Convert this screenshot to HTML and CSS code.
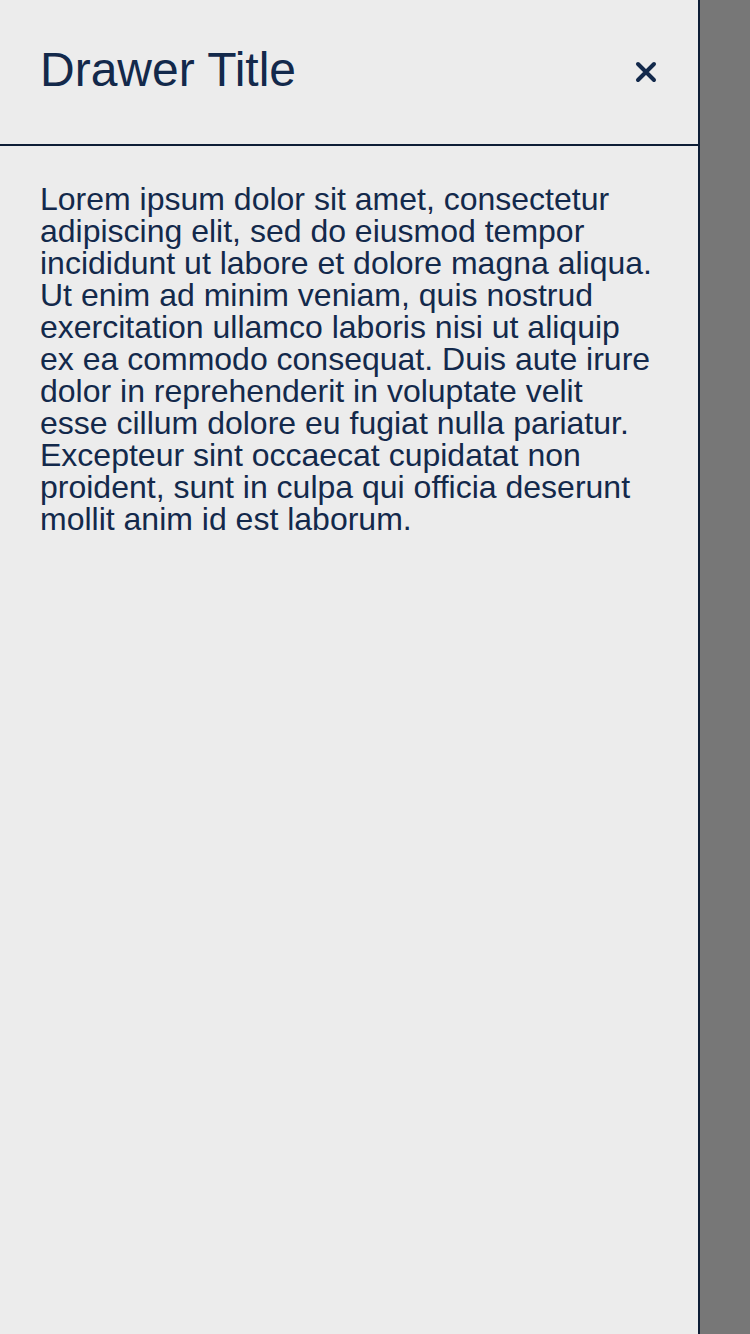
FILE: index.html
```html
<!DOCTYPE html>
<html>
<head>
<meta charset="utf-8">
<link rel="stylesheet" href="styles.css">
</head>
<body>
<div class="page">
  <aside class="drawer">
    <header class="drawer-header">
      <h1 class="drawer-title">Drawer Title</h1>
      <button class="close-btn" aria-label="Close">
        <svg width="24" height="24" viewBox="0 0 24 24"><path d="M4 4 L20 20 M20 4 L4 20" stroke="currentColor" stroke-width="4" stroke-linecap="round" fill="none"/></svg>
      </button>
    </header>
    <div class="drawer-body">
      <p class="drawer-text">Lorem ipsum dolor sit amet, consectetur adipiscing elit, sed do eiusmod tempor incididunt ut labore et dolore magna aliqua. Ut enim ad minim veniam, quis nostrud exercitation ullamco laboris nisi ut aliquip ex ea commodo consequat. Duis aute irure dolor in reprehenderit in voluptate velit esse cillum dolore eu fugiat nulla pariatur. Excepteur sint occaecat cupidatat non proident, sunt in culpa qui officia deserunt mollit anim id est laborum.</p>
    </div>
  </aside>
  <div class="overlay"></div>
</div>
</body>
</html>
```

FILE: styles.css
```css
html, body {
  margin: 0;
  padding: 0;
}
body {
  background: #777777;
  font-family: "Liberation Sans", Arial, sans-serif;
  color: #13294b;
}
.page {
  display: flex;
  height: 1334px;
}
.drawer {
  width: 698px;
  height: 1334px;
  background: #ececec;
  border-right: 2px solid #0e1e36;
  display: flex;
  flex-direction: column;
}
.drawer-header {
  height: 146px;
  box-sizing: border-box;
  border-bottom: 2px solid #0e1e36;
  padding: 0 40px 4px 40px;
  display: flex;
  align-items: center;
  justify-content: space-between;
}
.drawer-title {
  margin: 0;
  font-size: 48px;
  font-weight: normal;
  line-height: 1;
  color: #13294b;
}
.close-btn {
  background: none;
  border: 0;
  padding: 0;
  margin-top: 4px;
  color: #13294b;
  display: flex;
  cursor: pointer;
}
.drawer-body {
  padding: 37px 40px;
}
.drawer-text {
  margin: 0;
  font-size: 32px;
  line-height: 32px;
  color: #13294b;
}
.overlay {
  flex: 1;
  background: #777777;
}
```
